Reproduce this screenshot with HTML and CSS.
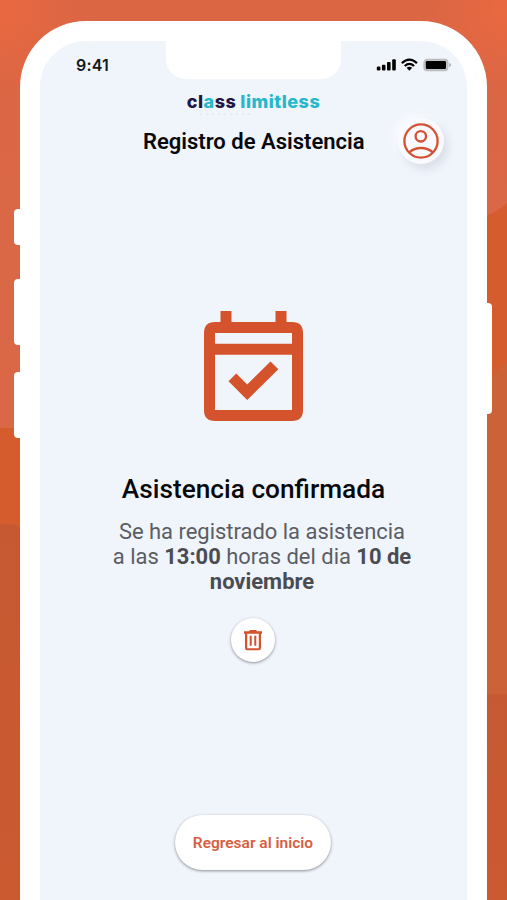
FILE: index.html
```html
<!DOCTYPE html>
<html lang="es">
<head>
<meta charset="utf-8">
<title>Registro de Asistencia</title>
<link rel="stylesheet" href="styles.css">
</head>
<body>
<svg class="backdrop" viewBox="0 0 507 900" aria-hidden="true">
  <defs>
    <linearGradient id="top" x1="0" y1="0" x2="0" y2="1"><stop offset="0" stop-color="#da6644"/><stop offset="1" stop-color="#da6a4b"/></linearGradient>
    <radialGradient id="glow"><stop offset="0" stop-color="#e96840"/><stop offset="1" stop-color="#e96840" stop-opacity="0"/></radialGradient>
    <linearGradient id="low" x1="0" y1="0" x2="0" y2="1"><stop offset="0" stop-color="#c65932"/><stop offset="1" stop-color="#cb5a31"/></linearGradient>
  </defs>
  <rect width="507" height="900" fill="url(#top)"/>
  <circle cx="0" cy="10" r="85" fill="url(#glow)"/>
  <circle cx="507" cy="10" r="85" fill="url(#glow)"/>
  <path d="M0 428Q12 427 24 431V900H0Z" fill="#d45c2d"/>
  <path d="M0 524Q12 523 24 528V900H0Z" fill="url(#low)"/>
  <path d="M484 216Q496 213 507 203V900H484Z" fill="#d45c2d"/>
  <path d="M484 385L507 360V900H484Z" fill="#cc6338"/>
  <path d="M484 694H507V900H484Z" fill="url(#low)"/>
</svg>
<main class="phone">
  <i class="key key-mute"></i><i class="key key-up"></i><i class="key key-down"></i><i class="key key-power"></i>
  <section class="screen">
    <header class="status">
      <span class="time">9:41</span>
      <span class="notch"></span>
      <svg class="signals" width="75" height="16" viewBox="0 0 75 16" aria-hidden="true">
        <rect x="0.8" y="9.5" width="3.6" height="4" rx="1.2"/>
        <rect x="5.9" y="7.8" width="3.6" height="5.7" rx="1"/>
        <rect x="11" y="5" width="3.6" height="8.5" rx="1"/>
        <rect x="16.2" y="2.3" width="3.6" height="11.2" rx="1"/>
        <g fill="none" stroke="#000" stroke-width="2.2"><path d="M25.8 6.1Q33.4-1 41 6.1"/><path d="M28.7 9Q33.4 4.8 38.1 9"/></g>
        <path d="M30.6 10.8Q33.4 8.5 36.2 10.8L33.4 13.7Z"/>
        <rect x="48" y="2.5" width="23.8" height="11" rx="3" fill="#c6c8cc" stroke="#b9bbc0" stroke-width="1.3"/>
        <rect x="49.8" y="4.1" width="20.2" height="7.8" rx="1.2"/>
        <path d="M73.2 6v4q2-.5 2-2t-2-2" fill="#aeb0b4"/>
      </svg>
    </header>
    <div class="brand"><span>cl</span><b>a</b><span>ss</span><b class="second">limitless</b></div>
    <svg class="brand-rule" width="52" height="4" viewBox="0 0 52 4" aria-hidden="true"><path d="M0 2H52" stroke="#e0eef6" stroke-width="2" stroke-dasharray="2 4"/></svg>
    <div class="heading">
      <h1>Registro de Asistencia</h1>
      <button class="profile" aria-label="Perfil">
        <svg width="38" height="38" viewBox="0 0 38 38"><g fill="none" stroke="#d35233" stroke-width="2.3"><circle cx="19" cy="19" r="16.6"/><circle cx="18.8" cy="14.3" r="5.2"/><path d="M7.3 30.3Q12 26 19 26T30.7 30.3"/></g></svg>
      </button>
    </div>
    <svg class="calendar" width="99" height="110" viewBox="0 0 99 110" aria-hidden="true">
      <path fill="#d4522c" fill-rule="evenodd" d="M16.5 0h11v11h44V0h11v11H88q11 0 11 11v77q0 11-11 11H11Q0 110 0 99V22Q0 11 11 11h5.5ZM11 22v10.8h77V22ZM11 43.8V99h77V43.8Z"/>
      <path fill="#d4522c" d="M24.5 70.3l7.8-7.8 10.9 10.9L66.5 50.5l7.8 7.8-31.1 30.7Z"/>
    </svg>
    <h2>Asistencia confirmada</h2>
    <p class="message"><span>Se ha registrado la asistencia</span><span>a las <strong>13:00</strong> horas del dia <strong>10 de</strong></span><strong>noviembre</strong></p>
    <button class="delete" aria-label="Eliminar">
      <svg width="18" height="21" viewBox="0 0 18 21"><path fill="#d4522c" fill-rule="evenodd" d="M0 1.3H5L6 0h6l1 1.3h5V3.7H17V18q0 2.3-2.3 2.3H3.3Q1 20.3 1 18V3.7H0ZM3.2 3.7V18.2h11.6V3.7ZM5.7 5.8h2v10h-2Zm4.6 0h2v10h-2Z"/></svg>
    </button>
    <button class="back">Regresar al inicio</button>
  </section>
</main>
</body>
</html>
```
FILE: styles.css
```css
* { box-sizing: border-box; }
body { margin: 0; height: 900px; padding: 21px 20px 0; overflow: hidden; position: relative; font-family: Roboto, sans-serif; background: #d96848; }
button { border: 0; padding: 0; font-family: inherit; display: flex; align-items: center; justify-content: center; background: #fff; }
.backdrop { position: absolute; inset: 0; width: 507px; height: 900px; }
.phone { position: relative; width: 467px; height: 879px; padding: 20px 20px 0; background: #fff; border-radius: 66px 66px 0 0; }
.key { position: absolute; width: 10px; background: #fff; border-radius: 4px; }
.key-mute { left: -6px; top: 188px; height: 36px; }
.key-up { left: -6px; top: 258px; height: 66px; }
.key-down { left: -6px; top: 351px; height: 66px; }
.key-power { right: -5px; top: 282px; height: 111px; }
.screen { height: 859px; background: #f0f4fb; border-radius: 46px 46px 0 0; display: flex; flex-direction: column; align-items: center; }
.status { width: 100%; height: 38px; display: grid; grid-template-columns: 126px 175px 1fr; flex: none; }
.time { font: 600 16px/20px Inter, sans-serif; letter-spacing: .2px; padding: 14px 0 0 36px; color: #17181c; white-space: nowrap; }
.notch { background: #fff; border-radius: 0 0 20px 20px; }
.signals { margin: 16px 0 0 35px; }
.brand { font: 800 18px/22px Inter, sans-serif; letter-spacing: .5px; color: #211646; margin-top: 12px; height: 21px; display: flex; white-space: nowrap; }
.brand b { font-weight: 800; color: #26b8ca; }
.brand .second { margin-left: 4px; }
.brand-rule { flex: none; margin: 0 56px 0 0; }
.heading { width: 100%; height: 50px; display: grid; grid-template-columns: 1fr 46px; padding-right: 23px; }
h1 { margin: 13px 0 0 103px; font-size: 22px; line-height: 26px; font-weight: 600; color: #08090c; white-space: nowrap; }
.profile { width: 46px; height: 46px; margin-top: 2px; border-radius: 50%; background: #f9fafd; box-shadow: 4px 5px 9px #d9dee8, -4px -4px 10px #f9fbff; }
.calendar { margin-top: 145px; flex: none; }
h2 { margin: 52px 0 0; font-size: 26.25px; line-height: 32px; font-weight: 500; color: #08090c; white-space: nowrap; }
.message { margin: 14px 0 0 17px; display: flex; flex-direction: column; align-items: center; font-size: 21.95px; line-height: 25px; color: #5a5d63; white-space: nowrap; }
.message strong { font-weight: 700; color: #4a4c52; }
.delete { width: 44px; height: 44px; margin: 24px 1px 0 0; border-radius: 50%; flex: none; box-shadow: 0 1px 3px #8b8e95; }
.back { width: 156px; height: 55px; margin: 153px 1px 0 0; border-radius: 28px; flex: none; color: #d6603f; font-size: 15.5px; font-weight: 600; box-shadow: 0 1px 3px #8b8e95; }
```
